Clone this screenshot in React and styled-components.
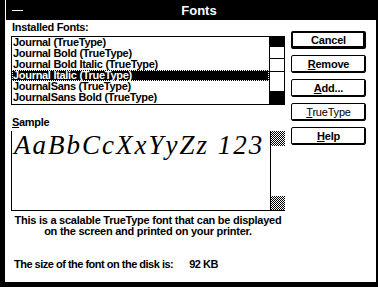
import styled, { createGlobalStyle, css } from "styled-components";

const GlobalStyle = createGlobalStyle`
  html, body {
    margin: 0;
    padding: 0;
    background: #000;
  }
  body {
    font-family: "Liberation Sans", Arial, sans-serif;
  }
`;

const dither = css`
  background: repeating-conic-gradient(#000 0 25%, #fff 0 50%) 0 0 / 2px 2px;
`;

const Window = styled.div`
  width: 378px;
  height: 287px;
  box-sizing: border-box;
  padding: 0 2px 5px 5px;
  background: #000;
  display: flex;
  flex-direction: column;
  overflow: hidden;
`;

const TitleBar = styled.div`
  height: 20px;
  flex: none;
  display: flex;
  align-items: center;
  border-left: 1px solid #fff;
  background: #000;
  color: #fff;
`;

const SysMenu = styled.div`
  width: 18px;
  height: 20px;
  display: flex;
  align-items: center;
  justify-content: center;
  padding-left: 2px;

  &::before {
    content: "";
    width: 11px;
    height: 1px;
    background: #fff;
  }
`;

const Title = styled.div`
  flex: 1;
  text-align: center;
  font-weight: bold;
  font-size: 13px;
  padding-right: 4px;
`;

const Client = styled.div`
  flex: 1;
  background: #fff;
  display: flex;
  gap: 6px;
  padding: 1px 10px 0 6px;
`;

const Main = styled.div`
  width: 274px;
  display: flex;
  flex-direction: column;
`;

const Label = styled.div`
  font-size: 11px;
  font-weight: bold;
  line-height: 12px;
  height: 12px;
  margin: ${(p) => p.$top || 0}px 0 3px 1px;
  letter-spacing: -0.3px;
  color: #000;
`;

const ListFrame = styled.div`
  height: 69px;
  box-sizing: border-box;
  border: 1px solid #000;
  display: flex;
`;

const List = styled.ul`
  flex: 1;
  margin: 0;
  padding: 0;
  list-style: none;
`;

const Item = styled.li`
  height: 11px;
  line-height: 11px;
  font-size: 11px;
  font-weight: bold;
  letter-spacing: -0.3px;
  padding-left: 1px;
  white-space: nowrap;
  color: ${(p) => (p.$selected ? "#fff" : "#000")};
  background: ${(p) => (p.$selected ? "#000" : "transparent")};
  outline: ${(p) => (p.$selected ? "1px dotted #fff" : "none")};
  outline-offset: -1px;
`;

const ScrollBar = styled.div`
  width: 15px;
  box-sizing: border-box;
  border-left: 1px solid #000;
  display: flex;
  flex-direction: column;
  justify-content: space-between;
`;

const Arrow = styled.div`
  height: ${(p) => p.$h}px;
  ${(p) => (p.$dither ? dither : css`background: #000;`)}
`;

const Thumb = styled.div`
  height: 14px;
  box-sizing: border-box;
  border-top: 1px solid #000;
  border-bottom: 1px solid #000;
`;

const Track = styled.div`
  flex: 1;
  display: flex;
  flex-direction: column;
  padding: 11px 0 17px;
`;

const SampleFrame = styled.div`
  height: 80px;
  box-sizing: border-box;
  border-left: 1px solid #000;
  border-bottom: 1px solid #000;
  display: flex;
`;

const SampleText = styled.div`
  flex: 1;
  padding: 0 0 0 2px;
  font-family: "Liberation Serif", "Times New Roman", serif;
  font-style: italic;
  font-size: 27px;
  line-height: 28px;
  letter-spacing: 2px;
  white-space: nowrap;
  color: #000;
`;

const Desc = styled.div`
  margin-top: 4px;
  font-size: 11px;
  font-weight: bold;
  line-height: 11px;
  text-align: center;
  letter-spacing: -0.25px;
  color: #000;
`;

const SizeLine = styled.div`
  margin: 22px 0 0 3px;
  font-size: 11px;
  font-weight: bold;
  line-height: 11px;
  letter-spacing: -0.5px;
  display: flex;
  gap: 16px;
  color: #000;
`;

const Buttons = styled.div`
  width: 75px;
  padding-top: 10px;
  display: flex;
  flex-direction: column;
  gap: 6px;
`;

const Button = styled.button`
  height: 18px;
  box-sizing: border-box;
  padding: 0;
  border: ${(p) => (p.$default ? 2 : 1)}px solid #000;
  border-radius: 2px;
  box-shadow: inset -1px -1px 0 #000;
  background: #fff;
  color: #000;
  font-family: "Liberation Sans", Arial, sans-serif;
  font-size: 11px;
  font-weight: ${(p) => (p.$light ? "normal" : "bold")};
  letter-spacing: -0.2px;
  line-height: 14px;
  text-align: center;
  cursor: pointer;

  u {
    text-decoration-thickness: 1px;
    text-underline-offset: 1px;
  }
`;

const fonts = [
  "Journal (TrueType)",
  "Journal Bold (TrueType)",
  "Journal Bold Italic (TrueType)",
  "Journal Italic (TrueType)",
  "JournalSans (TrueType)",
  "JournalSans Bold (TrueType)",
];

export default function App() {
  return (
    <>
      <GlobalStyle />
      <Window>
        <TitleBar>
          <SysMenu />
          <Title>Fonts</Title>
        </TitleBar>
        <Client>
          <Main>
            <Label>Installed Fonts:</Label>
            <ListFrame>
              <List>
                {fonts.map((name, i) => (
                  <Item key={name} $selected={i === 3}>
                    {name}
                  </Item>
                ))}
              </List>
              <ScrollBar>
                <Arrow $h={10} />
                <Track>
                  <Thumb />
                </Track>
                <Arrow $h={13} />
              </ScrollBar>
            </ListFrame>
            <Label $top={11}>
              <u>S</u>ample
            </Label>
            <SampleFrame>
              <SampleText>AaBbCcXxYyZz 123</SampleText>
              <ScrollBar>
                <Arrow $h={15} $dither />
                <Arrow $h={14} $dither />
              </ScrollBar>
            </SampleFrame>
            <Desc>
              This is a scalable TrueType font that can be displayed
              <br />
              on the screen and printed on your printer.
            </Desc>
            <SizeLine>
              <span>The size of the font on the disk is:</span>
              <span>92 KB</span>
            </SizeLine>
          </Main>
          <Buttons>
            <Button $default>Cancel</Button>
            <Button>
              <u>R</u>emove
            </Button>
            <Button>
              <u>A</u>dd...
            </Button>
            <Button $light>
              <u>T</u>rueType
            </Button>
            <Button>
              <u>H</u>elp
            </Button>
          </Buttons>
        </Client>
      </Window>
    </>
  );
}
